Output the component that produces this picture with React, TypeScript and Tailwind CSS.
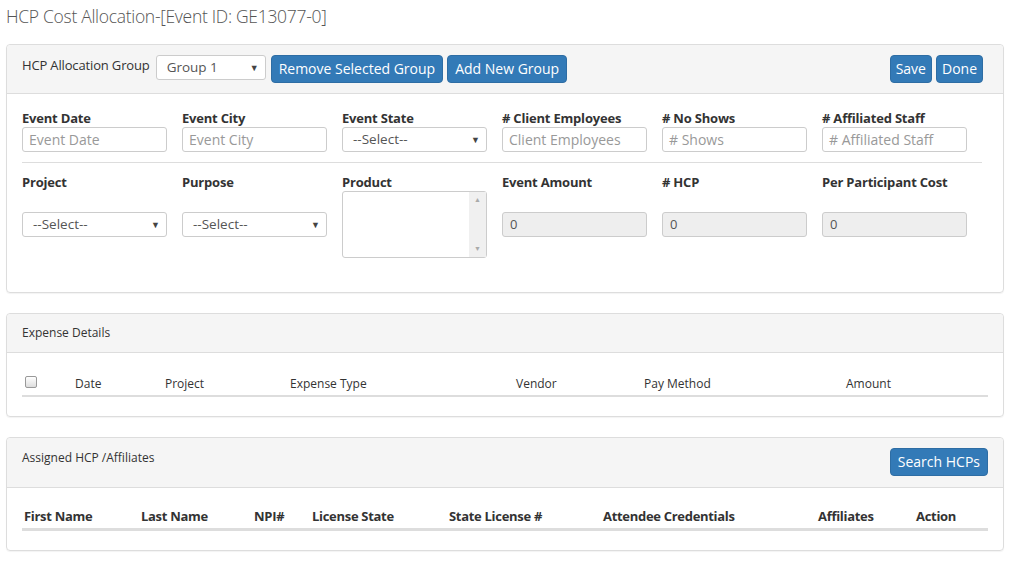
import React from "react";

const font = { fontFamily: '"Open Sans", "Segoe UI", sans-serif' };

function Arrow() {
  return <span className="text-[9px] text-[#444] leading-none">▼</span>;
}

function TextInput({ placeholder }: { placeholder: string }) {
  return (
    <div className="w-[145px] h-[25px] border border-[#ccc] rounded-[3px] bg-white px-[6px] flex items-center text-[14px] text-[#999]">
      {placeholder}
    </div>
  );
}

function SelectBox({ value, width = "w-[145px]" }: { value: string; width?: string }) {
  return (
    <div className={`${width} h-[25px] border border-[#ccc] rounded-[3px] bg-white pl-[10px] pr-[6px] flex items-center justify-between text-[13.5px] text-[#555]`}>
      <span>{value}</span>
      <Arrow />
    </div>
  );
}

function ReadOnly() {
  return (
    <div className="w-[145px] h-[25px] border border-[#ccc] rounded-[3px] bg-[#eee] px-[7px] flex items-center text-[13px] text-[#555]">
      0
    </div>
  );
}

function Btn({ children, tight }: { children: React.ReactNode; tight?: boolean }) {
  return (
    <button
      className={`h-[28px] ${tight ? "px-[5px]" : "px-[7px]"} bg-[#337ab7] border border-[#2e6da4] rounded-[4px] text-white text-[14px] leading-none`}
    >
      {children}
    </button>
  );
}

function Label({ children }: { children: React.ReactNode }) {
  return <div className="text-[13px] font-bold text-[#333] leading-[18px] tracking-[-0.2px]">{children}</div>;
}

export default function App() {
  const topFields = [
    ["Event Date", "Event Date"],
    ["Event City", "Event City"],
    ["Event State", ""],
    ["# Client Employees", "Client Employees"],
    ["# No Shows", "# Shows"],
    ["# Affiliated Staff", "# Affiliated Staff"],
  ];
  const expenseCols = [
    ["Date", "w-[90px]"],
    ["Project", "w-[125px]"],
    ["Expense Type", "w-[226px]"],
    ["Vendor", "w-[128px]"],
    ["Pay Method", "w-[202px]"],
    ["Amount", "flex-1"],
  ];
  const hcpCols = [
    ["First Name", "w-[117px]"],
    ["Last Name", "w-[113px]"],
    ["NPI#", "w-[58px]"],
    ["License State", "w-[137px]"],
    ["State License #", "w-[154px]"],
    ["Attendee Credentials", "w-[215px]"],
    ["Affiliates", "w-[98px]"],
    ["Action", "flex-1"],
  ];

  return (
    <div className="w-[1013px] h-[568px] bg-white px-[6px] text-[#333] overflow-hidden" style={font}>
      <h1 className="pt-[3px] h-[44px] text-[17.5px] font-light text-[#555] tracking-[-0.3px]">
        HCP Cost Allocation-[Event ID: GE13077-0]
      </h1>

      {/* allocation group panel */}
      <div className="w-[998px] border border-[#ddd] rounded-[4px] shadow-[0_1px_1px_rgba(0,0,0,0.05)]">
        <div className="h-[49px] bg-[#f5f5f5] border-b border-[#ddd] rounded-t-[4px] pl-[15px] pr-[20px] flex items-start pt-[10px]">
          <span className="text-[13px] text-[#333] mr-[6px] mt-[1px] tracking-[-0.15px]">HCP Allocation Group</span>
          <SelectBox value="Group 1" width="w-[110px]" />
          <div className="flex gap-[4px] ml-[5px]">
            <Btn>Remove Selected Group</Btn>
            <Btn>Add New Group</Btn>
          </div>
          <div className="flex gap-[4px] ml-auto">
            <Btn tight>Save</Btn>
            <Btn tight>Done</Btn>
          </div>
        </div>

        <div className="px-[15px] pt-[15px] h-[198px]">
          <div className="grid grid-cols-[repeat(6,160px)]">
            {topFields.map(([label, ph]) => (
              <div key={label} className="flex flex-col">
                <Label>{label}</Label>
                {label === "Event State" ? <SelectBox value="--Select--" /> : <TextInput placeholder={ph} />}
              </div>
            ))}
          </div>

          <div className="w-[960px] border-t border-[#ddd] mt-[10px] mb-[10px]" />

          <div className="grid grid-cols-[repeat(6,160px)]">
            <div>
              <Label>Project</Label>
              <div className="mt-[21px]"><SelectBox value="--Select--" /></div>
            </div>
            <div>
              <Label>Purpose</Label>
              <div className="mt-[21px]"><SelectBox value="--Select--" /></div>
            </div>
            <div>
              <Label>Product</Label>
              <div className="w-[145px] h-[67px] border border-[#ccc] rounded-[3px] bg-white flex justify-end">
                <div className="w-[17px] h-full bg-[#f0f0f0] flex flex-col items-center justify-between py-[3px] text-[7px] text-[#aaa]">
                  <span>▲</span>
                  <span>▼</span>
                </div>
              </div>
            </div>
            {["Event Amount", "# HCP", "Per Participant Cost"].map((l) => (
              <div key={l}>
                <Label>{l}</Label>
                <div className="mt-[21px]"><ReadOnly /></div>
              </div>
            ))}
          </div>
        </div>
      </div>

      {/* expense details */}
      <div className="w-[998px] mt-[20px] border border-[#ddd] rounded-[4px] shadow-[0_1px_1px_rgba(0,0,0,0.05)]">
        <div className="h-[39px] bg-[#f5f5f5] border-b border-[#ddd] rounded-t-[4px] pl-[15px] flex items-center">
          <span className="text-[12px] text-[#333]">Expense Details</span>
        </div>
        <div className="px-[15px] pt-[21px] h-[63px]">
          <div className="w-[966px] flex items-center h-[23px] border-b-2 border-[#ddd] text-[12px] text-[#333]">
            <div className="w-[53px] pl-[3px] pb-[6px]">
              <div className="w-[12px] h-[12px] border border-[#999] rounded-[2px] bg-gradient-to-b from-[#fff] to-[#ddd]" />
            </div>
            {expenseCols.map(([c, w]) => (
              <div key={c} className={`${w} pb-[2px]`}>{c}</div>
            ))}
          </div>
        </div>
      </div>

      {/* assigned hcp */}
      <div className="w-[998px] mt-[20px] border border-[#ddd] rounded-[4px] shadow-[0_1px_1px_rgba(0,0,0,0.05)]">
        <div className="h-[50px] bg-[#f5f5f5] border-b border-[#ddd] rounded-t-[4px] pl-[15px] pr-[15px] flex items-start justify-between pt-[10px]">
          <span className="text-[12px] text-[#333] mt-[1px]">Assigned HCP /Affiliates</span>
          <Btn>Search HCPs</Btn>
        </div>
        <div className="px-[15px] pt-[19px] h-[62px]">
          <div className="w-[966px] flex items-center h-[24px] border-b-[3px] border-[#ddd] text-[13px] font-bold text-[#333] pl-[2px] tracking-[-0.3px]">
            {hcpCols.map(([c, w]) => (
              <div key={c} className={`${w} pb-[2px]`}>{c}</div>
            ))}
          </div>
        </div>
      </div>
    </div>
  );
}
